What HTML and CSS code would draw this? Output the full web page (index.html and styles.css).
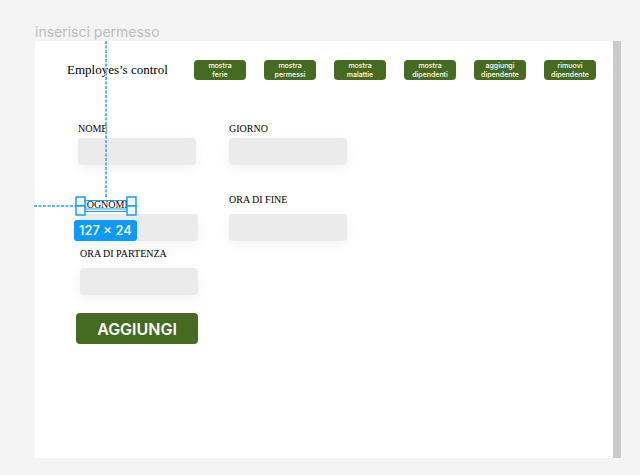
FILE: index.html
```html
<!DOCTYPE html>
<html lang="it">
<head>
<meta charset="utf-8">
<title>inserisci permesso</title>
<link rel="stylesheet" href="styles.css">
</head>
<body>
<p class="frame-name">inserisci permesso</p>
<main class="frame">
  <header class="topbar">
    <h1 class="brand">Employes’s control</h1>
    <nav class="menu">
      <button type="button" class="btn menu-btn">mostra<br>ferie</button>
      <button type="button" class="btn menu-btn">mostra<br>permessi</button>
      <button type="button" class="btn menu-btn">mostra<br>malattie</button>
      <button type="button" class="btn menu-btn">mostra<br>dipendenti</button>
      <button type="button" class="btn menu-btn">aggiungi<br>dipendente</button>
      <button type="button" class="btn menu-btn">rimuovi<br>dipendente</button>
    </nav>
  </header>
  <form class="form">
    <div class="column">
      <div class="field field-first">
        <label for="nome">NOME</label>
        <input id="nome" type="text">
      </div>
      <div class="field field-inset field-selected">
        <label for="cognome">COGNOME</label>
        <input id="cognome" type="text">
      </div>
      <div class="field field-inset field-spaced">
        <label for="partenza">ORA DI PARTENZA</label>
        <input id="partenza" type="text">
      </div>
      <button type="button" class="btn submit">AGGIUNGI</button>
    </div>
    <div class="column">
      <div class="field">
        <label for="giorno">GIORNO</label>
        <input id="giorno" type="text">
      </div>
      <div class="field field-spaced field-end">
        <label for="fine">ORA DI FINE</label>
        <input id="fine" type="text">
      </div>
    </div>
  </form>
  <div class="scrollbar"></div>
  <svg class="guides" width="104" height="176" viewBox="0 0 104 176" fill="none" stroke="#1b9cff" aria-hidden="true">
    <path d="M72 0V157M0 165H42" stroke="#5ab8ff" stroke-width="2" stroke-dasharray="3 1.5"/>
    <path d="M51 159.500H94M51 168H94M51 170.500H94" stroke-width="1"/>
    <g fill="#f2f8fd" stroke-width="1.500">
      <rect x="42" y="156" width="9" height="9"/>
      <rect x="42" y="165" width="9" height="9"/>
      <rect x="93" y="156" width="9" height="9"/>
      <rect x="93" y="165" width="9" height="9"/>
    </g>
  </svg>
  <span class="size-badge">127 × 24</span>
</main>
</body>
</html>
```
FILE: styles.css
```css
* {
  box-sizing: border-box;
}

body {
  margin: 0;
  padding: 22px 19px 17px 35px;
  min-height: 100vh;
  display: flex;
  flex-direction: column;
  background: #f4f4f4;
  font-family: Inter, "Liberation Sans", sans-serif;
}

.frame-name {
  margin: 0;
  font-size: 14px;
  line-height: 19px;
  color: #bdbdbd;
}

.frame {
  position: relative;
  flex: 1;
  padding: 19px 25px 19px 32px;
  background: #fff;
}

.topbar {
  display: flex;
  align-items: center;
  justify-content: space-between;
}

.brand {
  margin: 0;
  font: 400 13px/20px "Liberation Serif", serif;
  color: #000;
}

.menu {
  display: flex;
  gap: 18px;
}

.btn {
  border: 0;
  padding: 0;
  border-radius: 4px;
  background: #446b20;
  color: #fff;
  font-family: inherit;
}

.menu-btn {
  width: 52px;
  height: 20px;
  font-size: 7px;
  font-weight: 500;
  line-height: 9px;
}

.form {
  display: flex;
  gap: 31px;
  padding: 43px 0 0 9px;
}

.column {
  display: flex;
  flex-direction: column;
}

.field {
  display: flex;
  flex-direction: column;
  gap: 3px;
  width: 118px;
}

.field label {
  font: 400 10px/12px "Liberation Serif", serif;
  color: #000;
}

.field input {
  width: 100%;
  height: 27px;
  border: 0;
  border-radius: 4px;
  background: #ebebeb;
  box-shadow: 0 3px 12px rgba(0, 0, 0, 0.06);
}

.field-first {
  margin-left: 2px;
}

.field-inset {
  margin-left: 4px;
}

.field-selected {
  margin-top: 34px;
}

.field-spaced {
  gap: 8px;
  margin-top: 7px;
}

.field-end {
  margin-top: 29px;
}

.submit {
  width: 122px;
  height: 31px;
  margin-top: 18px;
  font-size: 16px;
  font-weight: 600;
}

.scrollbar {
  position: absolute;
  top: 0;
  right: 0;
  bottom: 0;
  width: 8px;
  background: #cbcbcb;
}

.guides {
  position: absolute;
  top: 0;
  left: -1px;
}

.size-badge {
  position: absolute;
  top: 179px;
  left: 39px;
  padding: 0 5px;
  border-radius: 3px;
  background: #0d99ff;
  color: #fff;
  font-size: 13px;
  font-weight: 500;
  line-height: 21px;
  white-space: nowrap;
}
```
